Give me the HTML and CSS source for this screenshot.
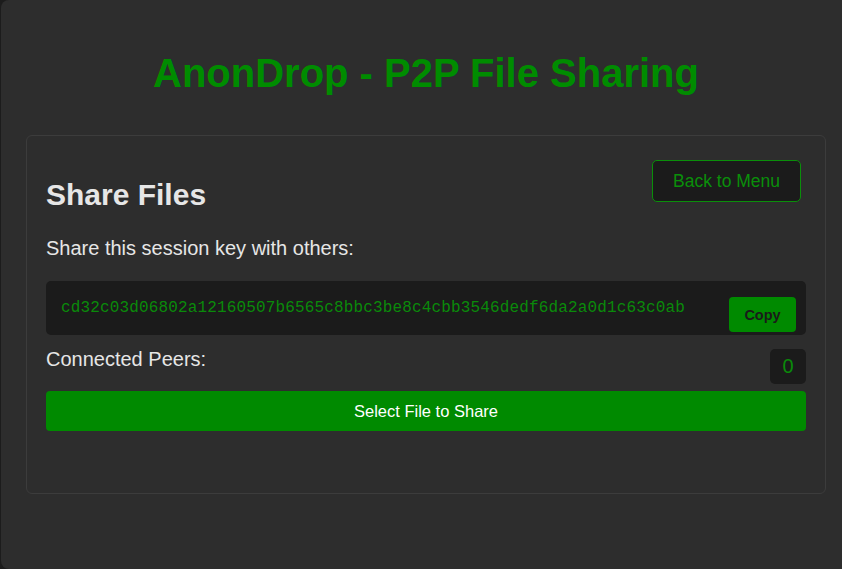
FILE: index.html
```html
<!DOCTYPE html>
<html lang="en">
<head>
<meta charset="utf-8">
<title>AnonDrop - P2P File Sharing</title>
<link rel="stylesheet" href="styles.css">
</head>
<body>
<div class="app">
  <h1 class="title">AnonDrop - P2P File Sharing</h1>
  <section class="card">
    <div class="card-header">
      <h2 class="card-title">Share Files</h2>
      <button class="back-btn">Back to Menu</button>
    </div>
    <p class="label">Share this session key with others:</p>
    <div class="key-box">
      <code class="key-text">cd32c03d06802a12160507b6565c8bbc3be8c4cbb3546dedf6da2a0d1c63c0ab</code>
      <button class="copy-btn">Copy</button>
    </div>
    <div class="peers-row">
      <span class="peers-label">Connected Peers:</span>
      <span class="peers-count">0</span>
    </div>
    <button class="select-btn">Select File to Share</button>
  </section>
</div>
</body>
</html>
```
FILE: styles.css
```css
html, body {
  margin: 0;
  padding: 0;
  height: 100%;
  overflow: hidden;
}
body {
  background: #1c1c1c;
  padding-left: 1px;
  font-family: "Liberation Sans", Arial, sans-serif;
  color: #e6e6e6;
}
.app {
  box-sizing: border-box;
  width: 850px;
  height: 569px;
  background: #2d2d2d;
  border-radius: 8px;
  padding: 50px 25px 0;
}
.title {
  margin: 0;
  font-size: 40px;
  line-height: 46px;
  font-weight: bold;
  color: #008c00;
  text-align: center;
}
.card {
  box-sizing: border-box;
  margin-top: 39px;
  width: 800px;
  border: 1px solid #3c3c3c;
  border-radius: 6px;
  background: #2d2d2d;
  padding: 24px 19px 20px;
}
.card-header {
  display: flex;
  justify-content: space-between;
  align-items: flex-start;
  padding-right: 5px;
}
.card-title {
  margin: 17px 0 0;
  font-size: 30px;
  line-height: 36px;
  font-weight: bold;
  color: #e6e6e6;
}
.back-btn {
  box-sizing: border-box;
  height: 42px;
  padding: 0 20px;
  background: #1b1b1b;
  border: 1px solid #0a8f0a;
  border-radius: 5px;
  color: #0a8f0a;
  font-family: "Liberation Sans", Arial, sans-serif;
  font-size: 17.5px;
}
.label {
  margin: 23px 0 0;
  font-size: 20px;
  line-height: 24px;
}
.key-box {
  box-sizing: border-box;
  margin-top: 21px;
  height: 54px;
  display: flex;
  align-items: center;
  justify-content: space-between;
  padding: 0 10px 0 15px;
  background: #1b1b1b;
  border-radius: 5px;
}
.key-text {
  font-family: "Liberation Mono", "Courier New", monospace;
  font-size: 16px;
  letter-spacing: 0.15px;
  color: #0a8a0a;
}
.copy-btn {
  box-sizing: border-box;
  margin-top: 13px;
  width: 67px;
  height: 35px;
  padding: 0;
  background: #008a00;
  border: none;
  border-radius: 4px;
  color: #1a1a1a;
  font-family: "Liberation Sans", Arial, sans-serif;
  font-weight: bold;
  font-size: 14.5px;
}
.peers-row {
  margin-top: 12px;
  display: flex;
  justify-content: space-between;
  align-items: flex-start;
}
.peers-label {
  font-size: 20px;
  line-height: 24px;
}
.peers-count {
  box-sizing: border-box;
  margin-top: 2px;
  width: 36px;
  height: 35px;
  display: flex;
  align-items: center;
  justify-content: center;
  background: #1b1b1b;
  border-radius: 5px;
  color: #0a8a0a;
  font-size: 20px;
}
.select-btn {
  display: block;
  width: 100%;
  height: 40px;
  margin: 7px 0 42px;
  background: #008a00;
  border: none;
  border-radius: 4px;
  color: #ffffff;
  font-family: "Liberation Sans", Arial, sans-serif;
  font-size: 16.5px;
}
```
